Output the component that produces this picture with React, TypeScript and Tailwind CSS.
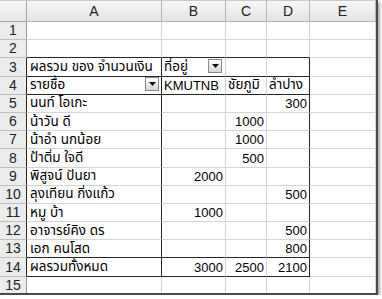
import { ReactNode } from "react";

type Row = {
  a?: ReactNode;
  b?: ReactNode;
  c?: ReactNode;
  d?: ReactNode;
};

const GRID = "border-[#d4d4d4]";
const DARK = "border-[#262626]";

const DropButton = () => (
  <span className="ml-auto mb-[1px] flex h-[14px] w-[14px] shrink-0 items-center justify-center border border-[#8a8a8a] bg-gradient-to-b from-white to-[#d6d6d6]">
    <svg width="7" height="4" viewBox="0 0 7 4">
      <path d="M0 0h7L3.5 4z" fill="#111" />
    </svg>
  </span>
);

const th = (s: string) => <span className="text-[13.5px]">{s}</span>;

const rows: Row[] = [
  {},
  {},
  {
    a: th("ผลรวม ของ จำนวนเงิน"),
    b: (
      <>
        {th("ที่อยู่")}
        <DropButton />
      </>
    ),
  },
  {
    a: (
      <>
        {th("รายชื่อ")}
        <DropButton />
      </>
    ),
    b: "KMUTNB",
    c: th("ชัยภูมิ"),
    d: th("ลำปาง"),
  },
  { a: th("นนท์ โอเกะ"), d: "300" },
  { a: th("น้าวัน ดี"), c: "1000" },
  { a: th("น้าอำ นกน้อย"), c: "1000" },
  { a: th("ป้าติ่ม ใจดี"), c: "500" },
  { a: th("พิสูจน์ ปันยา"), b: "2000" },
  { a: th("ลุงเทียน กิ่งแก้ว"), d: "500" },
  { a: th("หมู บ้า"), b: "1000" },
  { a: th("อาจารย์คิง ดร"), d: "500" },
  { a: th("เอก คนโสด"), d: "800" },
  { a: th("ผลรวมทั้งหมด"), b: "3000", c: "2500", d: "2100" },
  {},
];

const inPivot = (n: number) => n >= 3 && n <= 14;
const darkBottom = (n: number) => n === 2 || n === 3 || n === 4 || n === 13 || n === 14;

export default function App() {
  return (
    <div className="bg-white p-0">
      <div
        className="w-[378px] h-[295px] overflow-hidden border-r-2 border-b-2 border-[#4a4a4a] shadow-[2px_2px_3px_rgba(0,0,0,0.35)] text-[13px] leading-none text-black"
        style={{ fontFamily: '"Liberation Sans", "Noto Sans Thai", "Noto Sans", sans-serif' }}
      >
        <div className="grid grid-cols-[27px_135px_64px_41px_43px_66px] grid-rows-[21px_repeat(15,18.2px)] border-t border-[#c8c8c8]">
          {/* column headers */}
          <div className="border-r border-b border-[#a9a9a9] bg-gradient-to-b from-[#f7f7f7] to-[#e6e6e6]" />
          {["A", "B", "C", "D", "E"].map((h) => (
            <div
              key={h}
              className="flex items-center justify-center border-r border-b border-[#b5b5b5] bg-gradient-to-b from-[#f7f7f7] to-[#e4e4e4] text-[14px] text-[#222]"
            >
              {h}
            </div>
          ))}

          {rows.map((r, i) => {
            const n = i + 1;
            const pv = inPivot(n);
            const bottom = darkBottom(n) ? DARK : GRID;
            return (
              <div key={n} className="contents">
                <div
                  className={`flex items-end justify-center pb-[2px] border-b border-r bg-[#ececec] text-[14px] text-[#222] border-b-[#c0c0c0] ${
                    pv ? "border-r-[#262626]" : "border-r-[#9a9a9a]"
                  }`}
                >
                  {n}
                </div>
                <div
                  className={`flex items-end gap-1 pl-[3px] pr-[2px] pb-[2px] border-b border-r whitespace-nowrap ${bottom} ${
                    pv ? "border-r-[#262626]" : "border-r-[#d4d4d4]"
                  }`}
                >
                  {r.a}
                </div>
                <div
                  className={`flex items-end pb-[2px] border-b border-r whitespace-nowrap ${bottom} ${
                    n === 3 || n === 4 ? "justify-start pl-[2px] pr-[3px]" : "justify-end pr-[2px]"
                  } border-r-[#d4d4d4]`}
                >
                  {r.b}
                </div>
                <div
                  className={`flex items-end pb-[2px] border-b border-r whitespace-nowrap ${bottom} ${
                    n === 4 ? "justify-start pl-[2px]" : "justify-end pr-[2px]"
                  } border-r-[#d4d4d4]`}
                >
                  {r.c}
                </div>
                <div
                  className={`flex items-end pb-[2px] border-b border-r whitespace-nowrap ${bottom} ${
                    n === 4 ? "justify-start pl-[2px]" : "justify-end pr-[2px]"
                  } ${pv ? "border-r-[#262626]" : "border-r-[#d4d4d4]"}`}
                >
                  {r.d}
                </div>
                <div className={`border-b border-r ${GRID}`} />
              </div>
            );
          })}
        </div>
      </div>
    </div>
  );
}
